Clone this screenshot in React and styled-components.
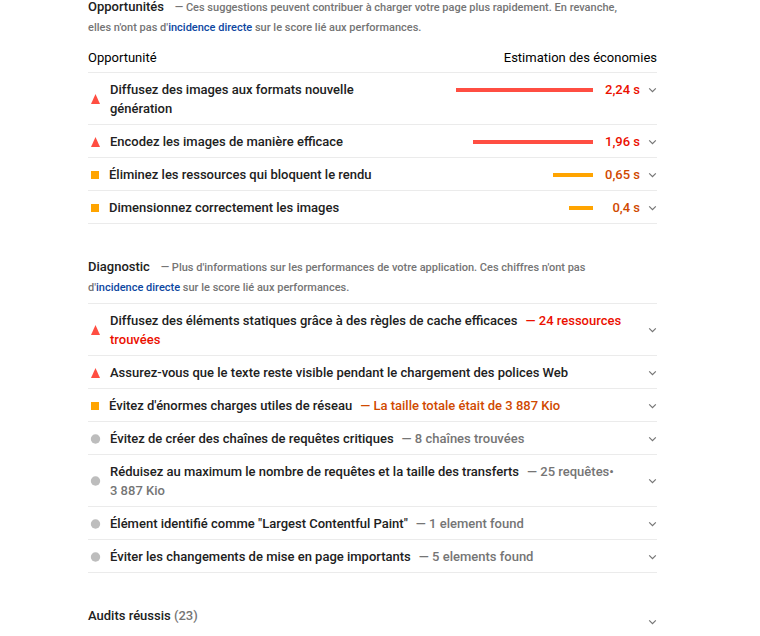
import React from 'react';
import styled, { createGlobalStyle } from 'styled-components';

const GlobalStyle = createGlobalStyle`
  * { box-sizing: border-box; }
  body {
    margin: 0;
    background: #fff;
    color: #212121;
    font-family: Roboto, "Liberation Sans", sans-serif;
    font-size: 13px;
    line-height: 19px;
    overflow: hidden;
  }
`;

const COLORS = { fail: '#ff4e42', average: '#ffa400', info: '#bdbdbd' };
const TEXT_COLORS = { fail: '#eb0f00', average: '#d04900', info: '#757575' };

const Report = styled.main`
  margin-top: -3px;
  padding: 0 103px 0 88px;
`;

const Group = styled.section`
  margin-bottom: 33px;
`;

const GroupHeader = styled.header`
  font-size: 11px;
  font-weight: 500;
  line-height: 20px;
  color: #757575;
  padding: 0 20px ${(p) => (p.$spacious ? 10 : 5)}px 0;
`;

const GroupTitle = styled.h2`
  display: inline;
  margin: 0 8px 0 0;
  font-size: 13px;
  font-weight: 500;
  color: #212121;
`;

const DocLink = styled.a`
  color: #0d47a1;
  text-decoration: none;
`;

const ColumnHeader = styled.div`
  display: flex;
  justify-content: space-between;
  padding-bottom: 5px;
  color: #000;
`;

const AuditList = styled.div`
  border-top: 1px solid #ebebeb;
`;

const AuditRow = styled.button`
  display: flex;
  align-items: center;
  width: 100%;
  padding: 7px 0 6px;
  border: 0;
  border-bottom: 1px solid #ebebeb;
  background: none;
  color: inherit;
  font: inherit;
  font-weight: 500;
  text-align: left;
  cursor: pointer;
`;

const StatusIcon = styled.svg`
  flex: none;
  width: ${(p) => (p.$status === 'average' ? 14 : 15)}px;
  height: 12px;
  margin-right: 7px;
`;

const AuditTitle = styled.span`
  flex: 1;
  padding-right: ${(p) => (p.$wide ? 16 : 80)}px;
`;

const Detail = styled.span`
  margin-left: 8px;
  color: ${(p) => TEXT_COLORS[p.$status]};
`;

const Savings = styled.span`
  display: flex;
  align-self: flex-start;
  align-items: center;
  width: 202px;
`;

const BarTrack = styled.span`
  display: flex;
  flex: 1;
  justify-content: flex-end;
`;

const Bar = styled.span`
  height: 4px;
  background: ${(p) => COLORS[p.$status]};
`;

const Amount = styled.span`
  width: 47px;
  text-align: right;
  color: ${(p) => TEXT_COLORS[p.$status]};
`;

const ChevronIcon = styled.svg`
  flex: none;
  width: 9px;
  height: 6px;
  margin-left: 8px;
`;

const ClumpHeader = styled.button`
  display: flex;
  align-items: flex-end;
  width: 100%;
  padding: 0;
  border: 0;
  background: none;
  color: inherit;
  font: inherit;
  font-weight: 500;
  text-align: left;
  cursor: pointer;
`;

const ClumpTitle = styled.span`
  flex: 1;
`;

const ClumpCount = styled.span`
  color: #757575;
`;

function Status({ status }) {
  return (
    <StatusIcon
      $status={status}
      viewBox={status === 'average' ? '0 0 14 12' : '0 0 15 12'}
      fill={COLORS[status]}
      aria-hidden="true"
    >
      {status === 'fail' && <path d="M7.5 1 12 11H3z" />}
      {status === 'average' && <path d="M3 2h8v8H3z" />}
      {status === 'info' && <circle cx="7.5" cy="6" r="4.7" />}
    </StatusIcon>
  );
}

function Chevron() {
  return (
    <ChevronIcon viewBox="0 0 9 6" fill="none" stroke="#757575" strokeWidth="1.2" aria-hidden="true">
      <path d="M1.2 1.4 4.5 4.7 7.8 1.4" />
    </ChevronIcon>
  );
}

const opportunities = [
  { status: 'fail', title: 'Diffusez des images aux formats nouvelle génération', bar: 137, amount: '2,24 s' },
  { status: 'fail', title: 'Encodez les images de manière efficace', bar: 120, amount: '1,96 s' },
  { status: 'average', title: 'Éliminez les ressources qui bloquent le rendu', bar: 40, amount: '0,65 s' },
  { status: 'average', title: 'Dimensionnez correctement les images', bar: 24, amount: '0,4 s' },
];

const diagnostics = [
  { status: 'fail', title: 'Diffusez des éléments statiques grâce à des règles de cache efficaces', detail: '24 ressources trouvées' },
  { status: 'fail', title: 'Assurez-vous que le texte reste visible pendant le chargement des polices Web' },
  { status: 'average', title: "Évitez d'énormes charges utiles de réseau", detail: 'La taille totale était de 3 887 Kio' },
  { status: 'info', title: 'Évitez de créer des chaînes de requêtes critiques', detail: '8 chaînes trouvées' },
  { status: 'info', title: 'Réduisez au maximum le nombre de requêtes et la taille des transferts', detail: '25 requêtes• 3\u00a0887\u00a0Kio' },
  { status: 'info', title: 'Élément identifié comme "Largest Contentful Paint"', detail: '1 element found' },
  { status: 'info', title: 'Éviter les changements de mise en page importants', detail: '5 elements found' },
];

export default function App() {
  return (
    <>
      <GlobalStyle />
      <Report>
        <Group>
          <GroupHeader $spacious>
            <GroupTitle>Opportunités</GroupTitle> — Ces suggestions peuvent contribuer à charger votre page plus
            rapidement. En revanche, elles n'ont pas d'<DocLink href="#performance">incidence directe</DocLink> sur le
            score lié aux performances.
          </GroupHeader>
          <ColumnHeader>
            <span>Opportunité</span>
            <span>Estimation des économies</span>
          </ColumnHeader>
          <AuditList>
            {opportunities.map((item) => (
              <AuditRow key={item.title} type="button">
                <Status status={item.status} />
                <AuditTitle>{item.title}</AuditTitle>
                <Savings>
                  <BarTrack>
                    <Bar $status={item.status} style={{ width: item.bar }} />
                  </BarTrack>
                  <Amount $status={item.status}>{item.amount}</Amount>
                  <Chevron />
                </Savings>
              </AuditRow>
            ))}
          </AuditList>
        </Group>
        <Group>
          <GroupHeader>
            <GroupTitle>Diagnostic</GroupTitle> — Plus d'informations sur les performances de votre application. Ces
            chiffres n'ont pas d'<DocLink href="#performance">incidence directe</DocLink> sur le score lié aux
            performances.
          </GroupHeader>
          <AuditList>
            {diagnostics.map((item) => (
              <AuditRow key={item.title} type="button">
                <Status status={item.status} />
                <AuditTitle $wide>
                  {item.title}
                  {item.detail && <Detail $status={item.status}>— {item.detail}</Detail>}
                </AuditTitle>
                <Chevron />
              </AuditRow>
            ))}
          </AuditList>
        </Group>
        <ClumpHeader type="button">
          <ClumpTitle>
            Audits réussis <ClumpCount>(23)</ClumpCount>
          </ClumpTitle>
          <Chevron />
        </ClumpHeader>
      </Report>
    </>
  );
}
